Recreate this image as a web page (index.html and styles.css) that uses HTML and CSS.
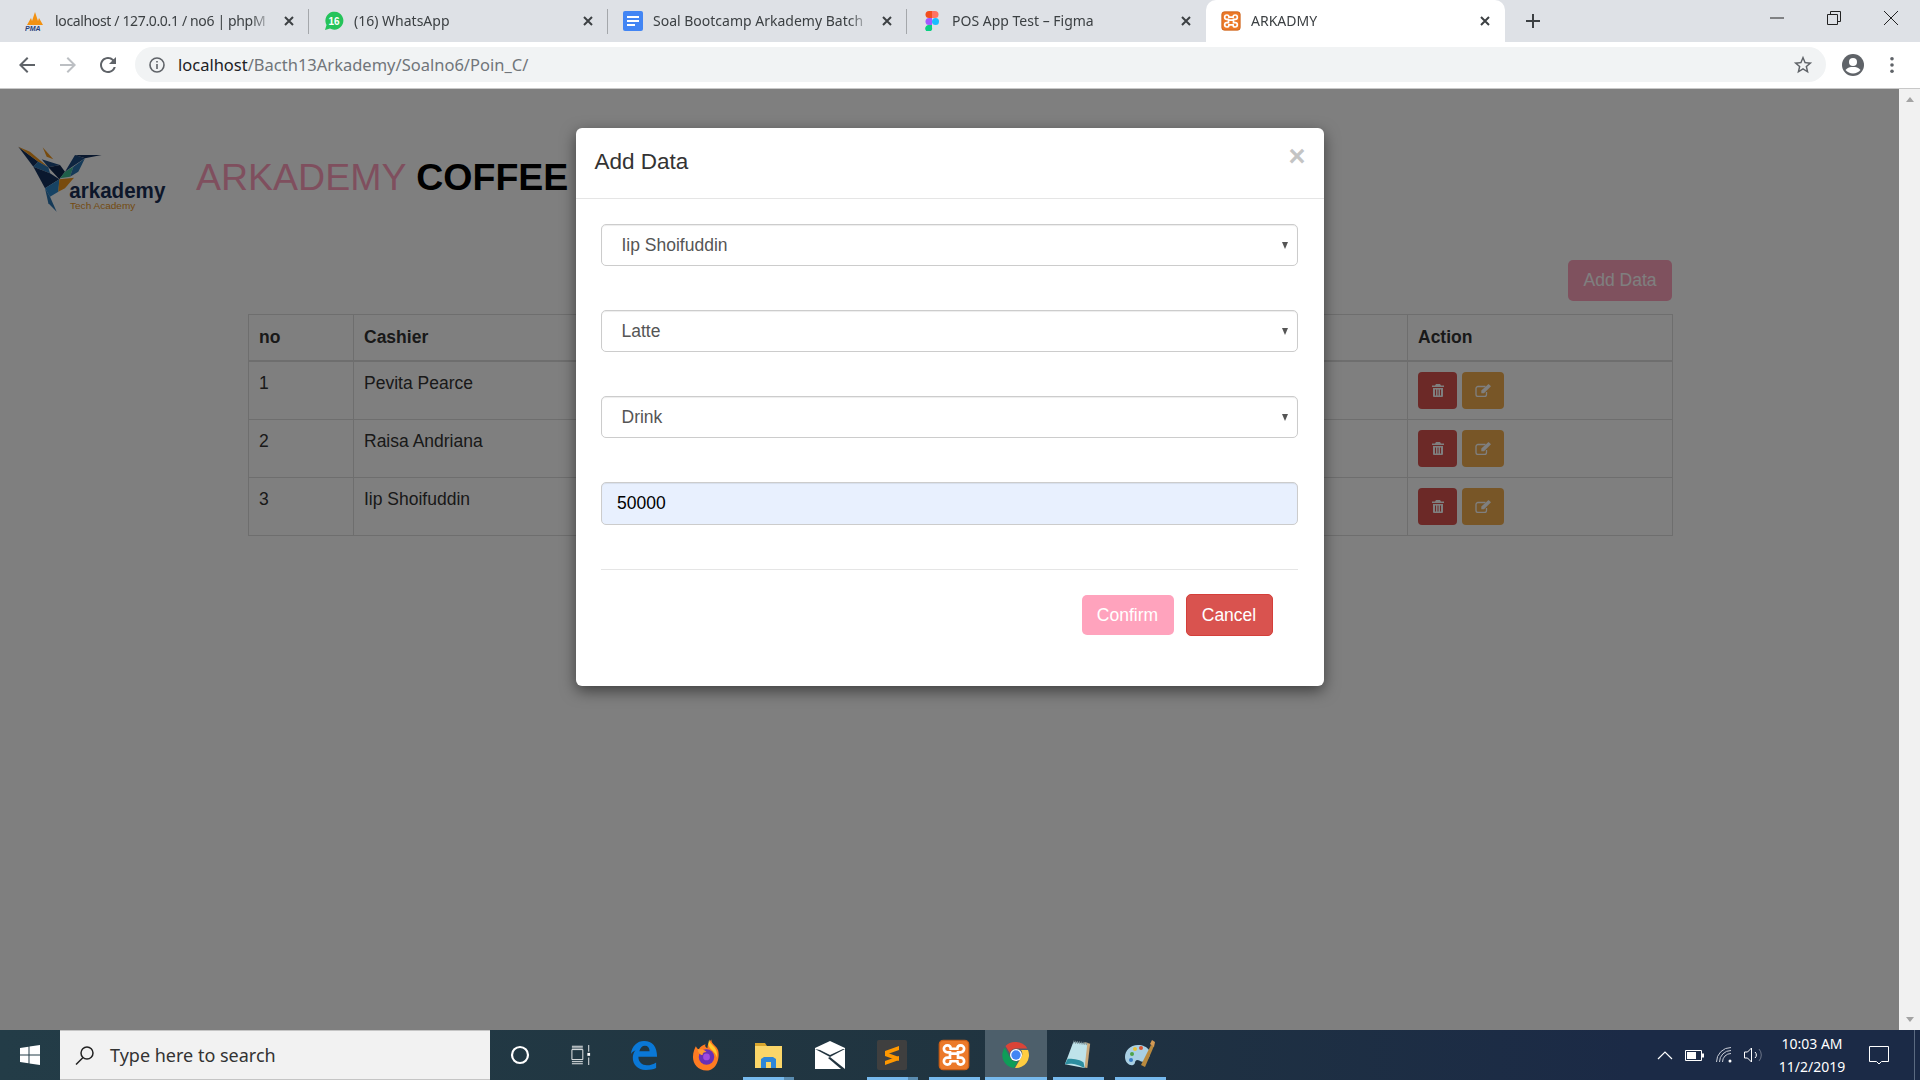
FILE: index.html
```html
<!DOCTYPE html>
<html lang="en">
<head>
  <meta charset="UTF-8" />
  <title>ARKADMY</title>
  <link rel="stylesheet" href="styles.css">
</head>
<body>
  <svg class="defs" width="0" height="0">
    <symbol id="ic-xampp" viewBox="0 0 24 24">
      <rect x="1" y="1" width="22" height="22" rx="3" fill="#ec7a2a"/>
      <rect x="1" y="1" width="22" height="22" rx="3" fill="none" stroke="#c95f17"/>
      <path d="M9 11V10H7a2.6 2.6 0 0 1 0-5.2c1.500 0 2.500 1 2.500 2.500h5c0-1.500 1-2.500 2.500-2.500a2.600 2.600 0 0 1 0 5.200h-2v4h2a2.600 2.600 0 0 1 0 5.200c-1.500 0-2.500-1-2.500-2.500h-5c0 1.500-1 2.500-2.500 2.500A2.600 2.600 0 0 1 7 14h2v-3h6" fill="none" stroke="#fff" stroke-width="2"/>
    </symbol>
    <symbol id="ic-trash" viewBox="0 0 12 13">
      <path fill="#fff" fill-rule="evenodd" d="M4 0h4l1 1.500h3V3H0V1.500h3zM1 4h10v8a1 1 0 0 1-1 1H2a1 1 0 0 1-1-1zm2 1.500V11.500h1V5.500zm2.500 0V11.500h1V5.500zm2.500 0V11.500h1V5.500z"/>
    </symbol>
    <symbol id="ic-edit" viewBox="0 0 16 13">
      <path fill="none" stroke="#fff" stroke-width="1.300" d="M10.500 2.500H3A2 2 0 0 0 1 4.500v6a2 2 0 0 0 2 2h6.500a2 2 0 0 0 2-2V8"/>
      <path fill="#fff" d="M13.500 0L16 2.300 9 9.200H6.300V6.500z"/>
    </symbol>
    <symbol id="ic-close" viewBox="0 0 12 12">
      <path d="M2 2l8 8M10 2l-8 8" stroke="#3c4043" stroke-width="2" fill="none"/>
    </symbol>
  </svg>

  <!-- barre des onglets -->
  <div class="tabstrip">
    <div class="tab">
      <svg class="favicon" viewBox="0 0 20 20">
        <path d="M2 14L6 7l1 3 3-9 3 9 1-3 4 7z" fill="#f29111"/>
        <text x="0" y="20" class="pma-text">PMA</text>
      </svg>
      <span class="tab-title tab-title-tight">localhost / 127.0.0.1 / no6 | phpM</span>
      <svg class="tab-close"><use href="#ic-close"/></svg>
    </div>
    <div class="tab">
      <svg class="favicon" viewBox="0 0 20 20">
        <path d="M1 19l1.500-5A9 9 0 1 1 6 17.500z" fill="#25c35a"/>
        <text x="10" y="14" class="wa-text">16</text>
      </svg>
      <span class="tab-title">(16) WhatsApp</span>
      <svg class="tab-close"><use href="#ic-close"/></svg>
    </div>
    <div class="tab">
      <svg class="favicon" viewBox="0 0 20 20">
        <rect x="0" y="0" width="20" height="20" rx="2" fill="#4285f4"/>
        <path d="M4 5h12v2H4zM4 9h12v2H4zM4 13h8v2H4z" fill="#fff"/>
      </svg>
      <span class="tab-title">Soal Bootcamp Arkademy Batch</span>
      <svg class="tab-close"><use href="#ic-close"/></svg>
    </div>
    <div class="tab tab-noline">
      <svg class="favicon" viewBox="0 0 20 20">
        <path d="M10 0H7a3.500 3.500 0 0 0 0 7h3z" fill="#f24e1e"/>
        <path d="M10 0h3a3.500 3.500 0 0 1 0 7h-3z" fill="#ff7262"/>
        <path d="M10 7H7a3.500 3.500 0 0 0 0 7h3z" fill="#a259ff"/>
        <circle cx="13.500" cy="10.500" r="3.500" fill="#1abcfe"/>
        <path d="M7 14h3v2.500A3.500 3.500 0 1 1 7 14z" fill="#0acf83"/>
      </svg>
      <span class="tab-title">POS App Test – Figma</span>
      <svg class="tab-close"><use href="#ic-close"/></svg>
    </div>
    <div class="tab tab-active">
      <svg class="favicon"><use href="#ic-xampp"/></svg>
      <span class="tab-title">ARKADMY</span>
      <svg class="tab-close"><use href="#ic-close"/></svg>
    </div>
    <svg class="newtab" viewBox="0 0 16 16"><path d="M8 1v14M1 8h14" stroke="#3c4043" stroke-width="2"/></svg>
    <div class="winctrl">
      <svg viewBox="0 0 14 14"><path d="M0 7h14" stroke="#222"/></svg>
      <svg viewBox="0 0 14 14"><path d="M.5 3.500h10v10H.5zM3.500 3.500V.5h10v10h-3" fill="none" stroke="#222"/></svg>
      <svg viewBox="0 0 14 14"><path d="M0 0l14 14M14 0L0 14" stroke="#222"/></svg>
    </div>
  </div>

  <!-- barre d'adresse -->
  <div class="toolbar">
    <svg class="tool" viewBox="0 0 24 24"><path fill="#5f6368" d="M20 11H7.830l5.590-5.590L12 4l-8 8 8 8 1.410-1.410L7.830 13H20z"/></svg>
    <svg class="tool" viewBox="0 0 24 24"><path fill="#bcbfc3" d="M4 11h12.170l-5.590-5.590L12 4l8 8-8 8-1.410-1.410L16.170 13H4z"/></svg>
    <svg class="tool" viewBox="0 0 24 24"><path fill="#5f6368" d="M17.650 6.350A7.958 7.958 0 0 0 12 4c-4.420 0-7.990 3.580-7.990 8s3.570 8 7.990 8c3.730 0 6.840-2.550 7.730-6h-2.080A5.990 5.990 0 0 1 12 18c-3.310 0-6-2.690-6-6s2.690-6 6-6c1.660 0 3.140.690 4.220 1.780L13 11h7V4z"/></svg>
    <div class="omnibox">
      <svg class="info" viewBox="0 0 16 16">
        <circle cx="8" cy="8" r="7" fill="none" stroke="#5f6368" stroke-width="1.600"/>
        <path d="M7.200 7h1.600v5H7.200zM7.200 4h1.600v1.600H7.200z" fill="#5f6368"/>
      </svg>
      <span class="url"><span class="url-host">localhost</span>/Bacth13Arkademy/Soalno6/Poin_C/</span>
      <svg class="star" viewBox="0 0 24 24"><path fill="#5f6368" d="M22 9.240l-7.190-.62L12 2 9.190 8.630 2 9.240l5.460 4.730L5.820 21 12 17.270 18.180 21l-1.630-7.030L22 9.240zM12 15.400l-3.760 2.270 1-4.280-3.320-2.880 4.380-.38L12 6.100l1.710 4.040 4.380.38-3.320 2.880 1 4.280L12 15.400z"/></svg>
    </div>
    <svg class="avatar" viewBox="0 0 24 24">
      <circle cx="12" cy="12" r="11" fill="#5f6368"/>
      <circle cx="12" cy="9" r="4" fill="#fff"/>
      <path d="M4.500 17c2-2.500 4.500-3 7.500-3s5.500.500 7.500 3c-2 2-4.500 3.500-7.500 3.500S6.500 19 4.500 17z" fill="#fff"/>
    </svg>
    <svg class="dots" viewBox="0 0 4 20"><circle cx="2" cy="3" r="2" fill="#5f6368"/><circle cx="2" cy="10" r="2" fill="#5f6368"/><circle cx="2" cy="17" r="2" fill="#5f6368"/></svg>
  </div>

  <div class="viewport">
    <main class="page">
      <header class="brand">
        <svg class="logo" viewBox="54 45 444 204">
          <polygon points="55,50 115,95 100,110" fill="#14305c"/>
          <polygon points="55,50 90,65 145,112 115,95" fill="#f0971c"/>
          <polygon points="100,110 115,95 145,112 150,130" fill="#2b74b0"/>
          <polygon points="128,52 160,88 140,80" fill="#f0971c"/>
          <polygon points="125,88 180,105 145,112" fill="#1d4a80"/>
          <polygon points="145,112 180,105 195,125 178,148" fill="#10264c"/>
          <polygon points="195,125 220,110 210,140 180,145" fill="#3fbf94"/>
          <polygon points="195,125 225,75 255,85 220,108" fill="#1d4a80"/>
          <polygon points="225,75 305,75 255,85" fill="#14305c"/>
          <polygon points="220,110 255,85 235,125 210,140" fill="#2b74b0"/>
          <polygon points="100,110 150,130 178,148 135,175" fill="#14305c"/>
          <polygon points="135,175 178,148 175,185 150,200" fill="#2f86c8"/>
          <polygon points="178,148 222,143 195,175 175,185" fill="#f0971c"/>
          <polygon points="135,175 150,200 170,245 145,220" fill="#2b74b0"/>
          <text x="208" y="203" class="logo-name" textLength="288" lengthAdjust="spacingAndGlyphs">arkademy</text>
          <text x="210" y="238" class="logo-sub" textLength="196" lengthAdjust="spacingAndGlyphs">Tech Academy</text>
        </svg>
        <h1 class="brand-title"><span class="brand-pink">ARKADEMY</span> <b>COFFEE</b></h1>
      </header>

      <div class="content">
        <div class="actions">
          <button class="btn btn-pink btn-add">Add Data</button>
        </div>
        <table class="tbl">
          <thead>
            <tr><th class="col-no">no</th><th class="col-cashier">Cashier</th><th></th><th class="col-action">Action</th></tr>
          </thead>
          <tbody>
            <tr>
              <td>1</td><td>Pevita Pearce</td><td></td>
              <td class="cell-action">
                <div class="row-btns">
                  <button class="ibtn ibtn-del"><svg class="ic-trash"><use href="#ic-trash"/></svg></button>
                  <button class="ibtn ibtn-edit"><svg class="ic-edit"><use href="#ic-edit"/></svg></button>
                </div>
              </td>
            </tr>
            <tr>
              <td>2</td><td>Raisa Andriana</td><td></td>
              <td class="cell-action">
                <div class="row-btns">
                  <button class="ibtn ibtn-del"><svg class="ic-trash"><use href="#ic-trash"/></svg></button>
                  <button class="ibtn ibtn-edit"><svg class="ic-edit"><use href="#ic-edit"/></svg></button>
                </div>
              </td>
            </tr>
            <tr>
              <td>3</td><td>Iip Shoifuddin</td><td></td>
              <td class="cell-action">
                <div class="row-btns">
                  <button class="ibtn ibtn-del"><svg class="ic-trash"><use href="#ic-trash"/></svg></button>
                  <button class="ibtn ibtn-edit"><svg class="ic-edit"><use href="#ic-edit"/></svg></button>
                </div>
              </td>
            </tr>
          </tbody>
        </table>
      </div>

      <!-- Modal -->
      <div class="backdrop">
        <section class="modal">
          <div class="modal-head">
            <h2>Add Data</h2>
            <span class="modal-x">×</span>
          </div>
          <form class="modal-body">
            <div class="select-wrap">
              <select><option>Iip Shoifuddin</option></select>
            </div>
            <div class="select-wrap">
              <select><option>Latte</option></select>
            </div>
            <div class="select-wrap">
              <select><option>Drink</option></select>
            </div>
            <input class="field" type="text" value="50000">
            <hr class="divider">
            <div class="modal-btns">
              <button type="button" class="btn btn-pink btn-confirm">Confirm</button>
              <button type="button" class="btn btn-red">Cancel</button>
            </div>
          </form>
        </section>
      </div>
    </main>
    <div class="scrollbar">
      <span class="arrow-up"></span>
      <span class="arrow-down"></span>
    </div>
  </div>

  <!-- barre des taches -->
  <footer class="taskbar">
    <div class="start">
      <svg viewBox="0 0 20 20" width="20" height="20"><path fill="#fff" d="M0 3l8.500-1.200V9.500H0zM9.500 1.600L20 0v9.500H9.500zM0 10.500h8.500v7.700L0 17zM9.500 10.500H20V20L9.500 18.400z"/></svg>
    </div>
    <div class="search">
      <svg viewBox="0 0 20 20" width="20" height="20"><circle cx="12" cy="8" r="6" fill="none" stroke="#222" stroke-width="1.500"/><path d="M8 12.500L1 19.500" stroke="#222" stroke-width="1.500"/></svg>
      <span>Type here to search</span>
    </div>
    <div class="task task-sys">
      <svg viewBox="0 0 20 20" width="20" height="20"><circle cx="10" cy="10" r="8" fill="none" stroke="#fff" stroke-width="2.200"/></svg>
    </div>
    <div class="task task-sys task-view">
      <svg viewBox="0 0 22 24" width="20" height="20" preserveAspectRatio="none"><path d="M1 1.500h12M1 22.500h12M1 5.500h12v12H1zM1 20h12M1 3.500h12" fill="none" stroke="#fff"/><path d="M19.500 0v8M19.500 15v9" stroke="#fff"/><rect x="18" y="9.500" width="3" height="3.500" fill="#fff"/></svg>
    </div>
    <div class="task">
      <svg viewBox="0 0 30 32" width="28" height="32"><path fill="#0a78d7" d="M1 15C2 6 8 1 15 1c9 0 14 6 14 17H9c0 6 4 9 9 9 4 0 7-1 10-3v6c-3 1.500-7 2-11 2C8 32 3 26 3 19c0-3 1-6 3-8-2 1-4 2-5 4zm9-3h11c0-4-2-6-5-6-3 0-5 2-6 6z"/></svg>
    </div>
    <div class="task">
      <svg viewBox="0 0 30 32" width="29" height="32">
        <path fill="#ff7b22" d="M15 32C6 32 1 25 1 18c0-5 2-9 3-11 1 2 2 3 3 3 2-3 4-4 7-5-1 2 0 3 2 4 0-3 1-6 4-9 0 5 5 6 7 11 2 7-1 21-12 21z"/>
        <path fill="#ffcb2e" d="M18 0c0 5 5 6 7 11 1 3 1 5 1 8-2-7-8-9-9-13 0-2 0-4 1-6z"/>
        <circle cx="15" cy="18" r="8" fill="#6a2fb5"/>
        <path fill="#ff9a30" d="M6 10c3 0 7 0 9 3-3 0-4 1-4 3-3 0-5-3-5-6z"/>
        <circle cx="15" cy="18" r="3.500" fill="#a14be0"/>
      </svg>
    </div>
    <div class="task task-open task-multi">
      <svg viewBox="0 0 28 28" width="28" height="28">
        <path fill="#d9a62e" d="M1 2h10l2 3h14v4H1z"/>
        <rect x="1" y="5" width="27" height="22" fill="#fbd669"/>
        <path fill="#2e86d8" d="M7 27V18l3-2h9l3 2v9h-5v-6h-5v6z"/>
      </svg>
    </div>
    <div class="task">
      <svg viewBox="0 0 30 28" width="30" height="28">
        <rect x="0" y="7" width="30" height="21" fill="#fff"/>
        <path d="M0 7L15 0l15 7-15 10z" fill="#fff"/>
        <path d="M0 8l15 8 15-8-2 0-13 6-10-5z" fill="#22343f"/>
        <path d="M15 16l15 12h-4L13 17z" fill="#22343f"/>
      </svg>
    </div>
    <div class="task task-open task-multi">
      <svg viewBox="0 0 30 30" width="30" height="30">
        <rect width="30" height="30" rx="2" fill="#3f3f3f"/>
        <path d="M22 6v4L8 15v-4zM8 12l14 5v4L8 16zM22 16v4L8 25v-4z" fill="#ff9800"/>
      </svg>
    </div>
    <div class="task task-open">
      <svg class="ic-xampp-task"><use href="#ic-xampp"/></svg>
    </div>
    <div class="task task-open task-active">
      <svg viewBox="0 0 28 28" width="28" height="30">
        <path fill="#db4437" d="M14 1a13 13 0 0 1 11.300 6.500H14A6.500 6.500 0 0 0 7.800 12L3.500 5A13 13 0 0 1 14 1z"/>
        <path fill="#0f9d58" d="M2.700 6.500L8.400 17a6.500 6.500 0 0 0 7.600 3.200L12 27A13 13 0 0 1 2.700 6.500z"/>
        <path fill="#ffcd40" d="M26 9a13 13 0 0 1-13 18l5.500-9.500A6.500 6.500 0 0 0 19 9z"/>
        <circle cx="14" cy="14" r="6" fill="#fff"/>
        <circle cx="14" cy="14" r="4.700" fill="#4285f4"/>
      </svg>
    </div>
    <div class="task task-open">
      <svg viewBox="0 0 30 32" width="28" height="32">
        <path fill="#caa87a" d="M22 2l6 2-3 26-5-1z"/>
        <path fill="#bfe3ea" d="M10 2l15 2-3 26L1 26z"/>
        <path fill="#2e8ea0" d="M1 26c4-1 11-2 21 4l-1-6C16 20 8 20 4 20z"/>
        <path d="M10 2l15 2" stroke="#7a8f94" stroke-width="3" stroke-dasharray="1 1"/>
      </svg>
    </div>
    <div class="task task-open">
      <svg viewBox="0 0 32 32" width="32" height="32">
        <path fill="#a9d0e4" d="M14 6C6 6 1 12 1 18c0 6 5 9 8 8 3-1 1-4 4-5 3 0 4 3 8 1 4-2 6-6 4-11-2-3-6-5-11-5z"/>
        <circle cx="8" cy="15" r="2" fill="#4fa34a"/><circle cx="11" cy="10" r="2" fill="#e8c33a"/>
        <circle cx="17" cy="9" r="2" fill="#d8532e"/><circle cx="7" cy="21" r="2" fill="#3a7cc4"/>
        <path d="M17 26L27 6l3 1-9 21z" fill="#b98a3e"/>
        <path d="M26 5l2-4 3 2-1 5z" fill="#d49a54"/>
      </svg>
    </div>
    <div class="tray">
      <svg class="tray-ic" viewBox="0 0 16 10" width="16" height="10"><path d="M1 9l7-7 7 7" fill="none" stroke="#fff" stroke-width="1.200"/></svg>
      <svg class="tray-ic" viewBox="0 0 19 11" width="19" height="11"><path d="M.5.500h16v10H.5z" fill="none" stroke="#fff"/><rect x="2" y="2" width="9" height="7" fill="#fff"/><rect x="17" y="3.500" width="2" height="4" fill="#fff"/></svg>
      <svg class="tray-ic" viewBox="0 0 16 16" width="16" height="16"><path d="M.5 15A14.500 14.500 0 0 1 15 .5M3.500 15A11.500 11.500 0 0 1 15 3.500M6.500 15A8.500 8.500 0 0 1 15 6.500" fill="none" stroke="#c9ced8"/><circle cx="14" cy="14" r="1.500" fill="#fff"/></svg>
      <svg class="tray-ic" viewBox="0 0 20 16" width="20" height="16"><path d="M.5 5h3l4-4v14l-4-4h-3z" fill="none" stroke="#fff"/><path d="M11 5a4 4 0 0 1 0 6" fill="none" stroke="#fff"/><path d="M15 2a9 9 0 0 1 0 12" fill="none" stroke="#6d7689"/></svg>
      <div class="clock"><span>10:03 AM</span><span>11/2/2019</span></div>
      <svg class="notif" viewBox="0 0 20 19" width="20" height="19"><path d="M.5.500h19v15h-7l-2.500 2.500-2.500-2.500h-7z" fill="none" stroke="#fff"/></svg>
      <div class="show-desktop"></div>
    </div>
  </footer>
</body>
</html>
```

FILE: styles.css
```css
* {
  box-sizing: border-box;
}

html, body {
  margin: 0;
  padding: 0;
  height: 1080px;
  overflow: hidden;
}

body {
  display: flex;
  flex-direction: column;
  font-family: "Liberation Sans", Arial, sans-serif;
  background: #fff;
}

.defs {
  position: absolute;
}

/* Onglets */
.tabstrip {
  display: flex;
  align-items: stretch;
  height: 42px;
  padding-left: 10px;
  background: #dee1e6;
  font-family: "Noto Sans", sans-serif;
  font-size: 14px;
  color: #3c4043;
}

.tab {
  position: relative;
  display: flex;
  align-items: center;
  gap: 10px;
  width: 299px;
  padding: 0 14px 0 15px;
}

.tab::after {
  content: "";
  position: absolute;
  right: 0;
  top: 9px;
  height: 25px;
  width: 1px;
  background: #a4a7ab;
}

.tab-noline::after,
.tab-active::after {
  display: none;
}

.tab-active {
  background: #fff;
  border-radius: 10px 10px 0 0;
}

.favicon {
  flex: none;
  width: 20px;
  height: 20px;
}

.pma-text {
  font: italic bold 7px "Liberation Sans", sans-serif;
  fill: #27407a;
}

.wa-text {
  font: bold 10px "Liberation Sans", sans-serif;
  fill: #fff;
  text-anchor: middle;
}

.tab-title {
  flex: 1;
  margin-top: -2px;
  overflow: hidden;
  white-space: nowrap;
  -webkit-mask-image: linear-gradient(to right, #000 90%, transparent 100%);
  mask-image: linear-gradient(to right, #000 90%, transparent 100%);
}

.tab-title-tight {
  letter-spacing: -0.35px;
}

.tab-close {
  flex: none;
  width: 12px;
  height: 12px;
}

.newtab {
  width: 16px;
  height: 16px;
  margin: 13px 0 0 20px;
}

.winctrl {
  display: flex;
  margin-left: auto;
  gap: 43px;
  padding: 11px 22px 0 0;
}

.winctrl svg {
  width: 14px;
  height: 14px;
}

/* Barre d'adresse */
.toolbar {
  display: flex;
  align-items: center;
  gap: 16.500px;
  height: 47px;
  padding-left: 15px;
  background: #fff;
  border-bottom: 1px solid #c8c8c8;
}

.tool {
  flex: none;
  width: 24px;
  height: 24px;
}

.omnibox {
  display: flex;
  align-items: center;
  width: 1690.500px;
  height: 35px;
  margin: -1px 0 0 -1.500px;
  padding: 0 12px 0 14px;
  background: #f1f3f4;
  border-radius: 18px;
}

.info {
  width: 16px;
  height: 16px;
  margin-right: 13px;
}

.url {
  flex: 1;
  font-family: "Noto Sans", sans-serif;
  font-size: 16.500px;
  color: #70757a;
  white-space: nowrap;
}

.url-host {
  color: #202124;
}

.star {
  width: 22px;
  height: 22px;
}

.avatar {
  flex: none;
  width: 24px;
  height: 24px;
  margin-left: -1px;
}

.dots {
  flex: none;
  width: 4px;
  height: 18px;
  margin-left: 8px;
}

/* Page */
.viewport {
  flex: 1;
  display: flex;
  min-height: 0;
}

.page {
  position: relative;
  flex: 1;
  background: #fff;
}

.brand {
  display: flex;
  align-items: center;
  height: 68px;
  margin: 56px 0 0 18px;
}

.logo {
  width: 148px;
  height: 68px;
  flex: none;
  overflow: visible;
}

.logo-name {
  font: bold 66px "Liberation Sans", sans-serif;
  fill: #1a2f55;
}

.logo-sub {
  font: 28px "Liberation Sans", sans-serif;
  fill: #e89524;
}

.brand-title {
  margin: -4px 0 0 30px;
  font-size: 37.500px;
  font-weight: normal;
  color: #000;
  white-space: nowrap;
}

.brand-pink {
  color: #ff9fbc;
}

.content {
  padding: 47px 226px 0 248px;
}

.actions {
  display: flex;
  justify-content: flex-end;
  margin: 0 1px 13px 0;
}

.btn {
  height: 40px;
  padding: 0;
  border: 1px solid transparent;
  border-radius: 5px;
  font-family: "Liberation Sans", sans-serif;
  font-size: 17.500px;
  color: #fff;
  white-space: nowrap;
}

.btn-pink {
  background: #ffa3bd;
}

.btn-add {
  height: 41px;
  width: 104px;
}

.btn-red {
  width: 87px;
  height: 42px;
  background: #d9534f;
  border-color: #d43f3a;
}

.btn-confirm {
  width: 92px;
}

.tbl {
  width: 100%;
  border-collapse: collapse;
  table-layout: fixed;
  font-size: 17.500px;
  color: #333;
}

.tbl th,
.tbl td {
  padding: 9.500px 10px;
  border: 1px solid #ddd;
  text-align: left;
  vertical-align: top;
  line-height: 25px;
}

.tbl thead th {
  height: 46px;
  border-bottom-width: 2px;
}

.tbl td {
  height: 58px;
}

.col-no {
  width: 105px;
}

.col-cashier {
  width: 300px;
}

.col-action {
  width: 265px;
}

.tbl .cell-action {
  padding: 10px;
}

.row-btns {
  display: flex;
  gap: 5px;
}

.ibtn {
  display: flex;
  align-items: center;
  justify-content: center;
  height: 37px;
  padding: 0;
  border: none;
  border-radius: 4px;
}

.ibtn-del {
  width: 39px;
  background: #d9534f;
}

.ibtn-edit {
  width: 42px;
  background: #f0ad4e;
}

.ic-trash {
  width: 12px;
  height: 13px;
}

.ic-edit {
  width: 16px;
  height: 13px;
}

/* Modal */
.backdrop {
  position: absolute;
  inset: 0;
  display: flex;
  justify-content: center;
  align-items: flex-start;
  padding-top: 39px;
  background: rgba(0, 0, 0, 0.5);
}

.modal {
  width: 748px;
  height: 558px;
  background: #fff;
  border-radius: 6px;
  box-shadow: 0 5px 15px rgba(0, 0, 0, 0.5);
}

.modal-head {
  display: flex;
  justify-content: space-between;
  height: 71px;
  padding: 0 18px 0 19px;
  border-bottom: 1px solid #e5e5e5;
}

.modal-head h2 {
  margin: 20px 0 0;
  font-size: 22.500px;
  font-weight: normal;
  line-height: 28px;
  color: #333;
}

.modal-x {
  margin: 11px 0 0;
  font-size: 29px;
  font-weight: bold;
  line-height: 34px;
  color: #c4c4c4;
}

.modal-body {
  display: flex;
  flex-direction: column;
  padding: 25px 26px 0 25px;
}

.select-wrap {
  position: relative;
  margin-bottom: 44px;
}

.select-wrap::after {
  content: "";
  position: absolute;
  right: 10px;
  top: 18px;
  border-left: 3.500px solid transparent;
  border-right: 3.500px solid transparent;
  border-top: 7px solid #555;
}

.select-wrap select {
  display: block;
  width: 100%;
  height: 42px;
  padding: 0 20px;
  appearance: none;
  background: #fff;
  border: 1px solid #ccc;
  border-radius: 5px;
  box-shadow: inset 0 1px 1px rgba(0, 0, 0, 0.075);
  font-family: "Liberation Sans", sans-serif;
  font-size: 17.500px;
  color: #555;
}

.field {
  height: 43px;
  padding: 0 15.500px;
  background: #e8f0fe;
  border: 1px solid #ccc;
  border-radius: 5px;
  box-shadow: inset 0 1px 1px rgba(0, 0, 0, 0.075);
  font-family: "Liberation Sans", sans-serif;
  font-size: 17.500px;
  color: #000;
}

.divider {
  width: 100%;
  margin: 44px 0 24px;
  border: none;
  border-top: 1px solid #e5e5e5;
}

.modal-btns {
  display: flex;
  align-items: center;
  justify-content: flex-end;
  gap: 12px;
  padding-right: 25px;
}

/* Barre de defilement */
.scrollbar {
  flex: none;
  display: flex;
  flex-direction: column;
  justify-content: space-between;
  align-items: center;
  width: 21px;
  padding: 8px 0;
  background: #f1f1f1;
}

.arrow-up,
.arrow-down {
  border-left: 4px solid transparent;
  border-right: 4px solid transparent;
}

.arrow-up {
  border-bottom: 5px solid #a3a3a3;
}

.arrow-down {
  border-top: 5px solid #a3a3a3;
}

/* Barre des taches */
.taskbar {
  flex: none;
  display: flex;
  align-items: stretch;
  height: 50px;
  background: linear-gradient(to right, #233c47, #203440 50%, #1b2a46 85%);
}

.start {
  display: flex;
  align-items: center;
  justify-content: center;
  width: 60px;
}

.search {
  display: flex;
  align-items: center;
  gap: 15px;
  width: 430px;
  padding-left: 15px;
  background: #f2f2f2;
  border-top: 1px solid #c5c5c5;
  border-bottom: 1px solid #c5c5c5;
  font-family: "Noto Sans", sans-serif;
  font-size: 18px;
  color: #333;
}

.task {
  position: relative;
  display: flex;
  align-items: center;
  justify-content: center;
  width: 62px;
}

.task-sys {
  width: 60.500px;
}

.task-view {
  margin-right: 2px;
}

.task-open::after {
  content: "";
  position: absolute;
  left: 6px;
  right: 5px;
  bottom: 0;
  height: 3px;
  background: #76b9ed;
}

.task-multi::before {
  content: "";
  position: absolute;
  right: 5px;
  bottom: 0;
  width: 10px;
  height: 3px;
  background: #5a8cb0;
  z-index: 1;
}

.task-active {
  background: #4d5f6b;
}

.task-active::after {
  left: 0;
  right: 0;
}

.ic-xampp-task {
  width: 32px;
  height: 32px;
}

.tray {
  display: flex;
  align-items: center;
  margin-left: auto;
}

.tray-ic {
  margin: 0 6px;
}

.clock {
  display: flex;
  flex-direction: column;
  align-items: center;
  gap: 3px;
  width: 84px;
  font-family: "Noto Sans", sans-serif;
  font-size: 14px;
  line-height: 20px;
  color: #fff;
}

.notif {
  margin: 0 15px;
}

.show-desktop {
  position: relative;
  align-self: stretch;
  width: 16px;
}

.show-desktop::after {
  content: "";
  position: absolute;
  left: 10px;
  top: 0;
  bottom: 0;
  width: 1px;
  background: #5b6a80;
}
```
